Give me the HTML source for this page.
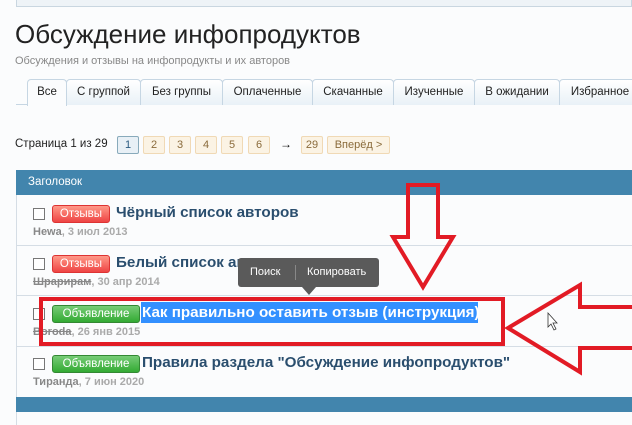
<!DOCTYPE html>
<html><head><meta charset="utf-8"><style>
body{margin:0;width:632px;height:425px;overflow:hidden;background:#fbfcfd;font-family:"Liberation Sans",sans-serif;position:relative}
.a{position:absolute;white-space:nowrap}
.tab{position:absolute;top:79px;height:25px;border:1px solid #c6d6e3;border-bottom:none;background:linear-gradient(#fff,#e9f1f7);font-size:11.5px;color:#222;text-align:center;line-height:25px;border-radius:4px 4px 0 0}
.pg{position:absolute;top:136px;height:16px;border:1px solid #f0d9b5;background:#fbf3e4;color:#8a6b3b;font-size:11px;line-height:16px;text-align:center;border-radius:2px}
.cb{position:absolute;width:10px;height:10px;border:1px solid #777;background:#fff}
.lb{position:absolute;height:16px;font-size:11.5px;line-height:16px;color:#fff;text-align:center;border-radius:3px}
.red{background:linear-gradient(#f98,#e44);border:1px solid #d33;width:56px}
.grn{background:linear-gradient(#7c7,#3a3);border:1px solid #383;width:86px}
.t{position:absolute;font-weight:bold;font-size:15.2px;color:#2a4e6e}
.m{position:absolute;font-size:11px;color:#aaa;font-weight:bold}
.m b{color:#888}
.sep{position:absolute;left:16px;right:0;height:1px;background:#d5dde5}
</style></head><body>
<div class="a" style="left:16px;top:0;right:0;height:6px;border:1px solid #c9d6e0;border-top:none;background:#eef3f7"></div>
<div class="a" style="left:15px;top:19px;font-size:26px;color:#222">Обсуждение инфопродуктов</div>
<div class="a" style="left:15px;top:55px;font-size:11px;color:#888">Обсуждения и отзывы на инфопродукты и их авторов</div>
<div class="a" style="left:16px;right:0;top:104px;height:1px;background:#c6d6e3"></div>
<div class="tab" style="left:27px;width:38px;background:#fbfcfd;height:26px">Все</div>
<div class="tab" style="left:66px;width:73px">С группой</div>
<div class="tab" style="left:140px;width:81px">Без группы</div>
<div class="tab" style="left:222px;width:89px">Оплаченные</div>
<div class="tab" style="left:312px;width:80px">Скачанные</div>
<div class="tab" style="left:393px;width:80px">Изученные</div>
<div class="tab" style="left:474px;width:84px">В ожидании</div>
<div class="tab" style="left:559px;width:80px">Избранное</div>
<div class="a" style="left:15px;top:138px;font-size:11.5px;color:#222">Страница 1 из 29</div>
<div class="pg" style="left:117px;width:20px;border-color:#8ab;background:#e8f0f6;color:#2a5a80">1</div>
<div class="pg" style="left:143px;width:20px">2</div>
<div class="pg" style="left:169px;width:20px">3</div>
<div class="pg" style="left:195px;width:20px">4</div>
<div class="pg" style="left:221px;width:20px">5</div>
<div class="pg" style="left:248px;width:20px">6</div>
<div class="a" style="left:280px;top:137px;font-size:12px">→</div>
<div class="pg" style="left:301px;width:20px">29</div>
<div class="pg" style="left:327px;width:61px">Вперёд &gt;</div>
<div class="a" style="left:16px;right:0;top:170px;height:25px;background:#4285ad;color:#fff;font-size:11.5px;line-height:24px;padding-left:12px">Заголовок</div>
<div class="a" style="left:16px;width:1px;top:195px;bottom:0;background:#d5dde5"></div>
<div class="cb" style="left:33px;top:208px"></div><div class="lb red" style="left:52px;top:205px">Отзывы</div>
<div class="t" style="left:116px;top:204px">Чёрный список авторов</div>
<div class="m" style="left:33px;top:226px"><b>Hewa</b>, 3 июл 2013</div>
<div class="sep" style="top:245px"></div>
<div class="cb" style="left:33px;top:258px"></div><div class="lb red" style="left:52px;top:255px">Отзывы</div>
<div class="t" style="left:116px;top:254px">Белый список авторов</div>
<div class="m" style="left:33px;top:276px"><b style="text-decoration:line-through">Шрарирам</b>, 30 апр 2014</div>
<div class="sep" style="top:295px"></div>
<div class="cb" style="left:33px;top:308px"></div><div class="lb grn" style="left:52px;top:305px">Объявление</div>
<div class="a" style="left:141px;top:302px;width:337px;height:21px;background:#3390ff"></div>
<div class="t" style="left:142px;top:304px;color:#fff">Как правильно оставить отзыв (инструкция)</div>
<div class="m" style="left:33px;top:326px"><b style="text-decoration:line-through">Boroda</b>, 26 янв 2015</div>
<div class="sep" style="top:346px"></div>
<div class="cb" style="left:33px;top:358px"></div><div class="lb grn" style="left:52px;top:355px">Объявление</div>
<div class="t" style="left:142px;top:354px">Правила раздела "Обсуждение инфопродуктов"</div>
<div class="m" style="left:33px;top:376px"><b>Тиранда</b>, 7 июн 2020</div>
<div class="a" style="left:16px;right:0;top:397px;height:15px;background:#4285ad"></div>
<div class="a" style="left:238px;top:258px;width:141px;height:29px;background:#5a5a5a;border-radius:3px;color:#fff;font-size:11px;line-height:29px"><span style="position:absolute;left:12px">Поиск</span><span style="position:absolute;left:57px;top:7px;width:1px;height:15px;background:#888"></span><span style="position:absolute;left:69px">Копировать</span></div>
<div class="a" style="left:302px;top:287px;width:0;height:0;border:7px solid transparent;border-top:8px solid #5a5a5a;border-bottom:none"></div>
<svg class="a" style="left:0;top:0" width="632" height="425">
<g fill="none" stroke="#e21b25" stroke-width="4" stroke-linejoin="miter">
<path d="M408 185 H438 V237 H453 L423 287 L393 237 H408 Z"/>
<path d="M632 307 H580 V285 L508 328 L580 372 V348 H632"/>
<rect x="41" y="299" width="462" height="45"/>
</g>
<path d="M548 313 v14 l3-3 3 6 2-1 -3-6 4 0 z" fill="#fff" stroke="#333" stroke-width="0.8"/>
</svg>
</body></html>
